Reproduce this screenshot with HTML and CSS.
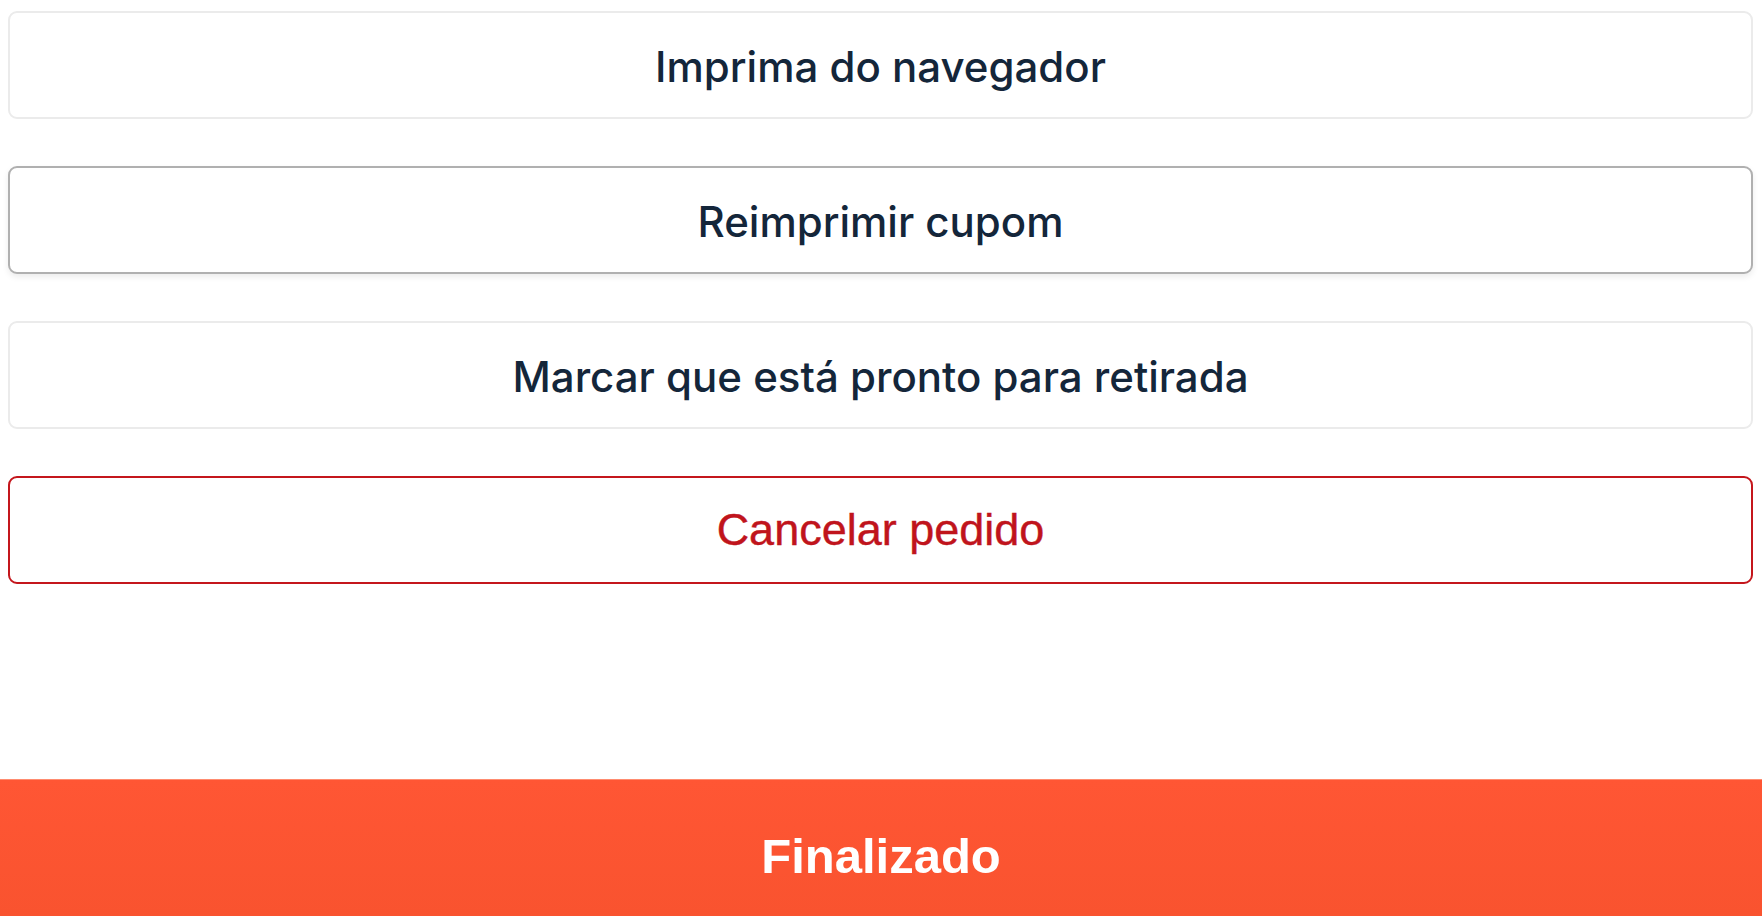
FILE: index.html
```html
<!DOCTYPE html>
<html lang="pt-BR">
<head>
<meta charset="utf-8">
<title>Pedido</title>
<link rel="stylesheet" href="styles.css">
</head>
<body>
<div class="page">
  <div class="actions">
    <button class="btn">Imprima do navegador</button>
    <button class="btn btn-focus">Reimprimir cupom</button>
    <button class="btn">Marcar que está pronto para retirada</button>
    <button class="btn btn-danger">Cancelar pedido</button>
  </div>
  <div class="footer">Finalizado</div>
</div>
</body>
</html>
```

FILE: styles.css
```css
html, body {
  margin: 0;
  padding: 0;
  background: #ffffff;
}
.page {
  height: 916px;
  display: flex;
  flex-direction: column;
  overflow: hidden;
}
.actions {
  flex: 1;
  display: flex;
  flex-direction: column;
  gap: 47px;
  padding: 11px 9px 0 8px;
}
.btn {
  height: 108px;
  width: 100%;
  box-sizing: border-box;
  background: #ffffff;
  border: 2px solid #ebebeb;
  border-radius: 9px;
  font-family: Inter, "Liberation Sans", sans-serif;
  font-weight: 500;
  font-size: 42px;
  color: #14263a;
  display: flex;
  align-items: center;
  justify-content: center;
  padding: 3px 0 0;
  cursor: pointer;
}
.btn-focus {
  border-color: #b0b0b0;
  box-shadow: 0 3px 6px rgba(0, 0, 0, 0.08);
}
.btn-danger {
  border-color: #c4161c;
  color: #c0141c;
  font-family: "Liberation Sans", Arial, sans-serif;
  font-weight: 400;
  font-size: 45px;
  padding-top: 0;
  -webkit-text-stroke: 0.4px #c0141c;
}
.footer {
  height: 137px;
  flex: none;
  box-sizing: border-box;
  padding-top: 16px;
  background: linear-gradient(#ff5634, #f9532f);
  border-top: 1px solid #ff8c70;
  color: #ffffff;
  font-family: "Liberation Sans", Arial, sans-serif;
  font-weight: 700;
  font-size: 49px;
  display: flex;
  align-items: center;
  justify-content: center;
}
```
